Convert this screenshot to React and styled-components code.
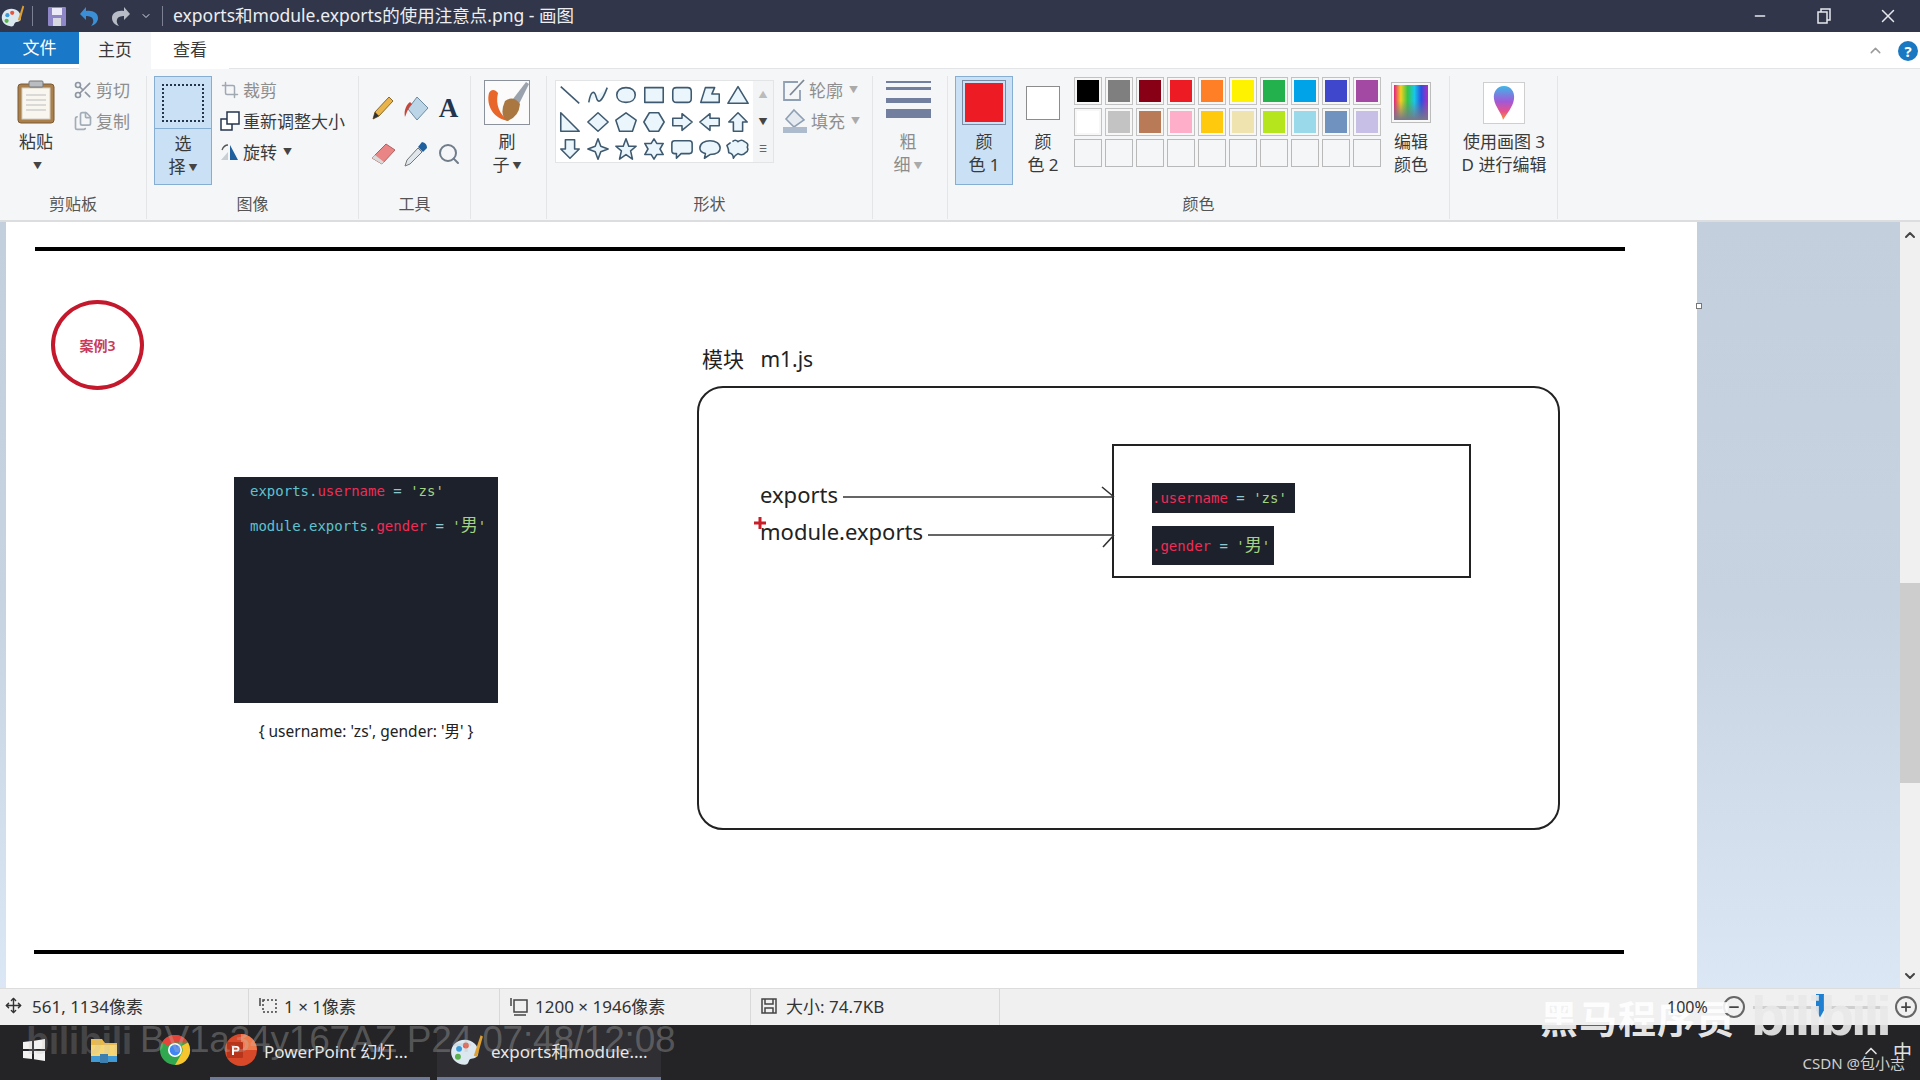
import React from 'react';
import styled, { createGlobalStyle } from 'styled-components';
import { ChevronUp, ChevronDown, Minus, X, Plus, Scissors, Files, Crop, Search, Move } from 'lucide-react';

const UI_FONT = '"Noto Sans", "Noto Sans CJK SC", sans-serif';
const CODE_FONT = '"DejaVu Sans Mono", "Noto Sans CJK SC", monospace';

const GlobalStyle = createGlobalStyle`
	html, body { margin: 0; padding: 0; background: #fff; }
	body { font-family: ${UI_FONT}; overflow: hidden; }
	* { box-sizing: border-box; }
`;

const Screen = styled.div`
	position: relative;
	width: 1920px;
	height: 1080px;
	overflow: hidden;
	display: flex;
	flex-direction: column;
	color: #3a3a3a;
`;

/* title bar */
const TitleBar = styled.div`
	height: 32px;
	background: #31364a;
	display: flex;
	align-items: center;
	color: #eceef2;
`;
const QuickIcon = styled.div`
	width: ${(p) => p.$w}px;
	height: 24px;
	display: flex;
	align-items: center;
	justify-content: center;
`;
const TitleRule = styled.div`
	width: 1px;
	height: 20px;
	background: #7b8092;
	margin: 0 ${(p) => p.$l}px 0 ${(p) => p.$r}px;
`;
const TitleText = styled.div`
	font-size: 17.5px;
	white-space: nowrap;
	flex: 1;
	line-height: 28px;
	height: 30px;
`;
const WindowButton = styled.div`
	width: 64px;
	height: 32px;
	display: flex;
	align-items: center;
	justify-content: center;
`;

/* tabs */
const TabRow = styled.div`
	height: 37px;
	background: #fff;
	display: flex;
	align-items: flex-start;
	border-bottom: 1px solid #e3e4e6;
	font-size: 17px;
`;
const FileTab = styled.div`
	width: 79px;
	height: 32px;
	background: #1979c8;
	color: #fff;
	text-align: center;
	line-height: 31px;
`;
const Tab = styled.div`
	width: ${(p) => p.$w}px;
	height: 37px;
	background: ${(p) => (p.$active ? '#f5f6f7' : '#fff')};
	text-align: center;
	line-height: 35px;
`;
const TabSpacer = styled.div`
	flex: 1;
`;
const TabTools = styled.div`
	display: flex;
	align-items: center;
	gap: 14px;
	height: 37px;
	padding-right: 2px;
`;
const HelpDot = styled.div`
	width: 20px;
	height: 20px;
	border-radius: 50%;
	background: #1a78c2;
	color: #fff;
	font-size: 15px;
	font-weight: 700;
	text-align: center;
	line-height: 20px;
`;

/* ribbon */
const Ribbon = styled.div`
	height: 153px;
	background: #f5f6f7;
	border-bottom: 2px solid #dcdddf;
	display: flex;
	padding-top: 7px;
`;
const Group = styled.div`
	width: ${(p) => p.$w}px;
	height: 143px;
	border-right: 1px solid #e4e5e7;
	display: flex;
	flex-direction: column;
	flex-shrink: 0;
`;
const GroupBody = styled.div`
	height: ${(p) => p.$h || 114}px;
	display: flex;
	padding-left: ${(p) => p.$pad || 0}px;
`;
const GroupLabel = styled.div`
	height: 29px;
	text-align: center;
	font-size: 16px;
	line-height: 28px;
	color: #555;
`;
const BigButton = styled.div`
	width: ${(p) => p.$w}px;
	height: 109px;
	flex-shrink: 0;
	margin-left: ${(p) => p.$ml || 0}px;
	display: flex;
	flex-direction: column;
	align-items: center;
	background: ${(p) => (p.$active ? '#c9e0f5' : 'transparent')};
	border: 1px solid ${(p) => (p.$active ? '#86aed3' : 'transparent')};
	color: ${(p) => (p.$muted ? '#8c8c8c' : '#3a3a3a')};
`;
const BigIcon = styled.div`
	height: 50px;
	padding-top: 3px;
	display: flex;
	align-items: flex-start;
	justify-content: center;
	flex-shrink: 0;
`;
const SelectTop = styled.div`
	width: 100%;
	height: 52px;
	border-bottom: 1px solid #86aed3;
	display: flex;
	align-items: center;
	justify-content: center;
	flex-shrink: 0;
`;
const Marquee = styled.div`
	width: 42px;
	height: 38px;
	border: 2px dotted #24344d;
`;
const BigText = styled.div`
	font-size: 17px;
	line-height: 23px;
	margin-top: 3px;
	text-align: center;
	white-space: pre-line;
`;
const Caret = styled.span`
	font-size: 9px;
	vertical-align: 2px;
	margin-left: 3px;
	color: ${(p) => p.$c || '#444'};
`;
const SmallList = styled.div`
	display: flex;
	flex-direction: column;
	margin-left: ${(p) => p.$ml}px;
	margin-top: -2px;
`;
const SmallRow = styled.div`
	height: 31px;
	display: flex;
	align-items: center;
	gap: 3px;
	font-size: 17px;
	white-space: nowrap;
	color: ${(p) => (p.$muted ? '#8e8e8e' : '#3a3a3a')};
`;
const SmallIcon = styled.div`
	width: 21px;
	display: flex;
	justify-content: center;
`;
const ToolGrid = styled.div`
	display: grid;
	grid-template-columns: repeat(3, 33px);
	grid-auto-rows: 46px;
	padding: 9px 0 0 7px;
`;
const ToolCell = styled.div`
	display: flex;
	align-items: center;
	justify-content: center;
	font-family: "Liberation Serif", serif;
	font-weight: 700;
	font-size: 27px;
	color: #24344d;
`;
const BrushBox = styled.div`
	width: 46px;
	height: 45px;
	border: 1px solid #8b929c;
	background: #fbfbfb;
`;
const Gallery = styled.div`
	margin-top: 4px;
	width: 219px;
	height: 83px;
	display: flex;
	border: 1px solid #e2e4e6;
	background: #fff;
	flex-shrink: 0;
`;
const GalleryGrid = styled.div`
	width: 197px;
	display: grid;
	grid-template-columns: repeat(7, 28px);
	grid-auto-rows: 27px;
`;
const GalleryCell = styled.div`
	display: flex;
	align-items: center;
	justify-content: center;
`;
const GalleryArrows = styled.div`
	flex: 1;
	background: #f3f4f5;
	display: flex;
	flex-direction: column;
	align-items: center;
	justify-content: space-around;
	font-size: 9px;
	color: #444;
`;
const WidthLines = styled.div`
	width: 45px;
	height: 50px;
	padding-top: 4px;
	display: flex;
	flex-direction: column;
	justify-content: flex-start;
	flex-shrink: 0;
`;
const WidthLine = styled.div`
	height: ${(p) => p.$h}px;
	margin-bottom: ${(p) => p.$mb}px;
	background: #737f9f;
`;
const RedSwatch = styled.div`
	width: 44px;
	height: 45px;
	border: 1px solid #7b8ba3;
	padding: 2px;
	&::before {
		content: '';
		display: block;
		width: 100%;
		height: 100%;
		background: #ed1c24;
	}
`;
const WhiteSwatch = styled.div`
	width: 34px;
	height: 34px;
	margin-top: 6px;
	border: 1px solid #8c8c8c;
	background: #fff;
`;
const Palette = styled.div`
	display: grid;
	grid-template-columns: repeat(10, 28px);
	grid-auto-rows: 28px;
	column-gap: 3px;
	row-gap: 3px;
	margin-left: 7px;
	flex-shrink: 0;
	height: 90px;
	margin-top: 1px;
`;
const PaletteCell = styled.div`
	border: 1px solid ${(p) => (p.$empty ? '#b9b9b9' : '#c2c2c2')};
	padding: 2px;
	background: ${(p) => (p.$empty ? '#f5f6f7' : '#f7f7f7')};
	&::before {
		content: '';
		display: block;
		width: 100%;
		height: 100%;
		background: ${(p) => p.$c};
	}
`;
const RainbowBox = styled.div`
	width: 40px;
	height: 41px;
	margin-top: 2px;
	border: 1px solid #bcbcbc;
	padding: 2px;
	background: #f7f7f7;
	&::before {
		content: '';
		display: block;
		width: 100%;
		height: 100%;
		background:
			linear-gradient(to bottom, transparent 45%, #77778a 100%),
			linear-gradient(to right, #e0207a, #f5d020, #35c448, #18c8e8, #2a50e0, #b02cc0);
	}
`;
const Paint3dBox = styled.div`
	width: 42px;
	height: 42px;
	margin-top: 2px;
	border: 1px solid #cfcfcf;
	background: #fff;
	display: flex;
	align-items: center;
	justify-content: center;
`;

/* work area */
const WorkArea = styled.div`
	height: 766px;
	display: flex;
`;
const Workspace = styled.div`
	flex: 1;
	padding-left: 6px;
	background: linear-gradient(to bottom, #c4cfdd 0%, #c8d3e2 50%, #dce7f6 100%);
`;
const Sheet = styled.div`
	position: relative;
	width: 1691px;
	height: 100%;
	background: #fff;
`;
const Handle = styled.div`
	position: absolute;
	left: 1690px;
	top: 81px;
	width: 6px;
	height: 6px;
	border: 1px solid #777;
	background: #fff;
`;
const Scrollbar = styled.div`
	position: relative;
	width: 20px;
	background: #f0f0f0;
	display: flex;
	flex-direction: column;
	justify-content: space-between;
	align-items: center;
	padding: 5px 0 4px;
	color: #444;
`;
const ScrollThumb = styled.div`
	position: absolute;
	left: 0;
	top: 361px;
	width: 20px;
	height: 200px;
	background: #cdcdcd;
`;

/* the picture open in paint */
const Rule = styled.div`
	position: absolute;
	left: ${(p) => p.$x}px;
	top: ${(p) => p.$y}px;
	width: 1590px;
	height: 4px;
	background: #000;
`;
const Badge = styled.div`
	position: absolute;
	left: 45px;
	top: 78px;
	width: 93px;
	height: 90px;
	border: 4px solid #c4182c;
	border-radius: 50%;
	display: flex;
	align-items: center;
	justify-content: center;
	font-size: 14px;
	font-weight: 600;
	color: #c93a5c;
`;
const CodeCard = styled.div`
	position: absolute;
	left: 228px;
	top: 255px;
	width: 264px;
	height: 226px;
	background: #1d212c;
	padding: 2px 0 0 16px;
	font-family: ${CODE_FONT};
	font-size: 14px;
	white-space: pre;
`;
const CodeLine = styled.div`
	height: 34px;
	line-height: 24px;
`;
const Obj = styled.span`
	color: #5fc3cf;
`;
const Prop = styled.span`
	color: #f02c55;
`;
const Op = styled.span`
	color: #8fc7d0;
`;
const Str = styled.span`
	color: #a3d283;
`;
const Wide = styled.span`
	font-size: 17px;
`;
const Caption = styled.div`
	position: absolute;
	left: 228px;
	top: 497px;
	width: 264px;
	text-align: center;
	font-size: 15.5px;
	line-height: 24px;
	color: #222;
`;
const ModuleTitle = styled.div`
	position: absolute;
	left: 696px;
	top: 122px;
	font-size: 21px;
	line-height: 30px;
	color: #222;
	white-space: pre;
`;
const ModuleBox = styled.div`
	position: absolute;
	left: 691px;
	top: 164px;
	width: 863px;
	height: 444px;
	border: 2px solid #222;
	border-radius: 26px;
`;
const InnerBox = styled.div`
	position: absolute;
	left: 1106px;
	top: 222px;
	width: 359px;
	height: 134px;
	border: 2px solid #222;
`;
const VarName = styled.div`
	position: absolute;
	left: 754px;
	top: ${(p) => p.$y}px;
	font-size: 22px;
	line-height: 32px;
	color: #222;
`;
const Chip = styled.div`
	position: absolute;
	left: 1146px;
	top: ${(p) => p.$y}px;
	width: ${(p) => p.$w}px;
	height: ${(p) => p.$h}px;
	background: #1d212c;
	font-family: ${CODE_FONT};
	font-size: 14px;
	line-height: ${(p) => p.$h}px;
	white-space: pre;
`;
const ArrowLayer = styled.svg`
	position: absolute;
	left: 0;
	top: 0;
	width: 1691px;
	height: 766px;
	pointer-events: none;
`;

/* status bar */
const StatusBar = styled.div`
	height: 37px;
	background: #f0f0f0;
	border-top: 1px solid #dcdcdc;
	display: flex;
	align-items: center;
	font-size: 17px;
	color: #333;
`;
const StatusCell = styled.div`
	width: ${(p) => p.$w}px;
	height: 100%;
	border-right: 1px solid #d9d9d9;
	display: flex;
	align-items: center;
	gap: ${(p) => p.$gap || 6}px;
	padding-left: ${(p) => p.$pad}px;
	padding-bottom: 3px;
	white-space: nowrap;
`;
const ZoomArea = styled.div`
	flex: 1;
	display: flex;
	align-items: center;
	justify-content: flex-end;
	gap: 6px;
	padding-right: 3px;
`;
const ZoomText = styled.div`
	position: relative;
	z-index: 2;
	font-size: 16px;
	width: 45px;
	margin-right: 5px;
`;
const ZoomButton = styled.div`
	width: 22px;
	height: 22px;
	border-radius: 50%;
	border: 2px solid #666;
	display: flex;
	align-items: center;
	justify-content: center;
	color: #444;
`;
const ZoomTrack = styled.div`
	position: relative;
	width: 134px;
	height: 3px;
	margin: 0 2px;
	background: #cfcfcf;
`;
const ZoomThumb = styled.div`
	position: absolute;
	left: 63px;
	top: -12px;
	width: 8px;
	height: 24px;
	background: #1f7fd0;
	clip-path: polygon(0 0, 100% 0, 100% 70%, 50% 100%, 0 70%);
`;

/* taskbar */
const Taskbar = styled.div`
	height: 55px;
	background: #242426;
	display: flex;
	align-items: stretch;
	color: #e8e8e8;
	font-size: 17px;
`;
const TaskItem = styled.div`
	width: ${(p) => p.$w}px;
	margin-right: ${(p) => p.$mr || 0}px;
	display: flex;
	align-items: center;
	justify-content: ${(p) => (p.$label ? 'flex-start' : 'center')};
	gap: ${(p) => p.$gap || 6}px;
	padding-left: ${(p) => p.$pad || 0}px;
	padding-bottom: 2px;
	white-space: nowrap;
	background: ${(p) => (p.$active ? '#2f2f33' : 'transparent')};
	border-bottom: 3px solid ${(p) => (p.$open ? '#6f7a96' : 'transparent')};
`;
const Tray = styled.div`
	position: absolute;
	right: 8px;
	top: 1037px;
	display: flex;
	align-items: center;
	gap: 12px;
	color: #e0e0e0;
	font-size: 19px;
`;

/* video watermarks */
const VideoStamp = styled.div`
	position: absolute;
	left: 140px;
	top: 1017px;
	font-family: "Liberation Sans", sans-serif;
	font-size: 37px;
	line-height: 46px;
	letter-spacing: -0.2px;
	color: rgba(190, 190, 190, 0.33);
	white-space: nowrap;
`;
const BiliGhost = styled.div`
	position: absolute;
	left: 26px;
	top: 1018px;
	font-family: "Liberation Sans", sans-serif;
	font-size: 38px;
	line-height: 46px;
	font-weight: 700;
	letter-spacing: -0.5px;
	color: rgba(190, 190, 190, 0.22);
`;
const BrandText = styled.div`
	position: absolute;
	left: 1540px;
	top: 990px;
	font-size: 38px;
	line-height: 56px;
	font-weight: 700;
	letter-spacing: 1px;
	color: rgba(255, 255, 255, 0.9);
	white-space: nowrap;
`;
const BrandLogo = styled.div`
	position: absolute;
	left: 1751px;
	top: 985px;
	font-family: "Liberation Sans", sans-serif;
	font-size: 56px;
	line-height: 62px;
	font-weight: 700;
	letter-spacing: -3px;
	color: rgba(232, 232, 232, 0.92);
`;
const CsdnMark = styled.div`
	position: absolute;
	right: 15px;
	top: 1052px;
	font-size: 15px;
	line-height: 22px;
	color: #cfcfcf;
	white-space: nowrap;
`;

const row1 = ['#000000', '#7f7f7f', '#880015', '#ed1c24', '#ff7f27', '#fff200', '#22b14c', '#00a2e8', '#3f48cc', '#a349a4'];
const row2 = ['#ffffff', '#c3c3c3', '#b97a57', '#ffaec9', '#ffc90e', '#efe4b0', '#b5e61d', '#99d9ea', '#7092be', '#c8bfe7'];

// shape gallery outlines, 24x24 box
const shapes = [
	'M2 3L22 21',
	'M2 20C4 8 8 6 10 14S16 20 22 4',
	'M12 4C18 4 22 7 22 12S18 20 12 20 2 17 2 12 6 4 12 4Z',
	'M2 4H22V20H2Z',
	'M6 4H18Q22 4 22 8V16Q22 20 18 20H6Q2 20 2 16V8Q2 4 6 4Z',
	'M2 20L7 4H17L14 11H22V20Z',
	'M12 3L23 21H1Z',
	'M2 2L22 22H2Z',
	'M12 2L23 12 12 22 1 12Z',
	'M12 2L23 10 19 22H5L1 10Z',
	'M7 2H17L23 12 17 22H7L1 12Z',
	'M2 8H12V3L23 12 12 21V16H2Z',
	'M22 8H12V3L1 12 12 21V16H22Z',
	'M12 2L22 12H17V22H7V12H2Z',
	'M7 2H17V12H22L12 22 2 12H7Z',
	'M12 1L15 9 23 12 15 15 12 23 9 15 1 12 9 9Z',
	'M12 1L15 9H23L17 14 19 23 12 18 5 23 7 14 1 9H9Z',
	'M12 1L15 6H22L18.5 12 22 18H15L12 23 9 18H2L5.5 12 2 6H9Z',
	'M4 3H20Q23 3 23 6V14Q23 17 20 17H11L6 22V17H4Q1 17 1 14V6Q1 3 4 3Z',
	'M12 3C18 3 23 6 23 11S18 18 12 18L6 22 7 17C3 16 1 14 1 11 1 6 6 3 12 3Z',
	'M6 4Q9 1 12 4 16 1 19 4 24 6 22 10 24 14 20 16 17 20 12 17 8 19 7 22 7 17 2 16 2 12 0 8 3 6 4 5 6 4Z',
];

const ShapeIcon = ({ d }) => (
	<svg width="24" height="24" viewBox="-1 -1 26 26">
		<path d={d} fill="#eaf6fb" stroke="#3f5a70" strokeWidth="1.7" strokeLinejoin="round" />
	</svg>
);

const PasteIcon = () => (
	<svg width="38" height="44" viewBox="0 0 38 44">
		<rect x="1" y="4" width="36" height="39" rx="3" fill="#a97f4c" stroke="#7b5a33" />
		<rect x="5" y="8" width="28" height="31" fill="#f8f6ef" stroke="#d5cfc2" />
		<path d="M9 15H29M9 20H29M9 25H29M9 30H29" stroke="#cfcfcf" strokeWidth="1.5" />
		<rect x="12" y="1" width="14" height="6" rx="1" fill="#b9bcc0" stroke="#777" />
	</svg>
);

const ResizeIcon = () => (
	<svg width="20" height="20" viewBox="0 0 20 20" fill="#fff" stroke="#24344d" strokeWidth="1.5">
		<rect x="1" y="8" width="11" height="11" />
		<rect x="7" y="1" width="12" height="12" />
	</svg>
);

const RotateIcon = () => (
	<svg width="20" height="20" viewBox="0 0 20 20">
		<path d="M10 3L18 18H10Z" fill="#1f5f9e" />
		<path d="M1 18L8 10V18Z" fill="#c9ced4" />
		<path d="M2 8Q4 3 8 3" fill="none" stroke="#555" strokeWidth="1.3" />
	</svg>
);

const PencilIcon = () => (
	<svg width="24" height="26" viewBox="0 0 24 26">
		<path d="M18 2L22 6 8 21 2 24 4 17Z" fill="#e9b44c" stroke="#8a6a2c" />
		<path d="M2 24L4 17 8 21Z" fill="#333" />
	</svg>
);

const BucketIcon = () => (
	<svg width="26" height="28" viewBox="0 0 26 28">
		<path d="M14 3L25 14 14 26 5 15Z" fill="#bcd6e8" stroke="#6e8ba0" />
		<path d="M7 8C2 12 1 18 2 23 4 18 5 14 9 10Z" fill="#c8453a" />
	</svg>
);

const EraserIcon = () => (
	<svg width="26" height="24" viewBox="0 0 26 24">
		<path d="M16 2L25 8 12 22 2 16Z" fill="#e98585" stroke="#b06060" />
		<path d="M2 16L12 22 14 20 5 13Z" fill="#d9d9d9" />
	</svg>
);

const DropperIcon = () => (
	<svg width="26" height="28" viewBox="0 0 26 28">
		<path d="M19 2Q24 3 24 8L20 12 15 7Z" fill="#1f5f9e" />
		<path d="M15 8L19 12 7 24 2 26 4 20Z" fill="#dfe6ec" stroke="#777" />
	</svg>
);

const BrushIcon = () => (
	<svg width="44" height="43" viewBox="0 0 44 43">
		<path d="M4 12C1 24 8 38 24 40 15 34 10 24 13 12 10 8 6 8 4 12Z" fill="#e8662a" />
		<path d="M28 18L41 1 44 3 34 23Z" fill="#9aa3ad" />
		<path d="M20 20Q28 14 35 23 34 36 22 40 14 34 20 20Z" fill="#a9773f" />
	</svg>
);

const OutlineIcon = () => (
	<svg width="24" height="24" viewBox="0 0 24 24" fill="none" stroke="#8fa0b5" strokeWidth="1.8">
		<path d="M16 4H2V22H18V12" />
		<path d="M8 17L22 2" stroke="#7d8796" />
	</svg>
);

const FillIcon = () => (
	<svg width="26" height="26" viewBox="0 0 26 26">
		<path d="M12 2L22 12 12 19 4 11Z" fill="#e6ebf1" stroke="#8fa0b5" strokeWidth="1.6" />
		<rect x="1" y="19" width="24" height="6" fill="#aebbcc" />
	</svg>
);

const Paint3dIcon = () => (
	<svg width="24" height="36" viewBox="0 0 24 36">
		<defs>
			<linearGradient id="drop3d" x1="0" y1="0" x2="0" y2="1">
				<stop offset="0" stopColor="#3fb6e8" />
				<stop offset="0.45" stopColor="#a05ad8" />
				<stop offset="0.75" stopColor="#e8508a" />
				<stop offset="1" stopColor="#f29a30" />
			</linearGradient>
		</defs>
		<path d="M12 1C19 1 23 7 22 14 21 22 15 28 11 35 10 28 3 22 2 14 1 7 5 1 12 1Z" fill="url(#drop3d)" />
	</svg>
);

const PaintAppIcon = ({ size }) => (
	<svg width={size} height={size} viewBox="0 0 30 30">
		<path d="M13 6C6 6 1 11 1 17S6 28 13 28C17 28 16 24 18 23S25 23 25 17 20 6 13 6Z" fill="#dbe8f0" />
		<circle cx="8" cy="14" r="2.6" fill="#3a9ad9" />
		<circle cx="14" cy="11" r="2.6" fill="#e8553a" />
		<circle cx="7" cy="21" r="2.6" fill="#5ab04c" />
		<path d="M21 20L27 2 29 3 24 21Z" fill="#e0a030" />
	</svg>
);

const SaveIcon = () => (
	<svg width="18" height="19" viewBox="0 0 18 19">
		<rect width="18" height="19" rx="1" fill="#8f86c8" />
		<rect x="4" y="1" width="10" height="7" fill="#eceaf6" />
		<rect x="5" y="11" width="8" height="8" fill="#d8d8e0" />
	</svg>
);

const UndoIcon = ({ color, flip }) => (
	<svg width="22" height="22" viewBox="0 0 22 22" style={flip ? { transform: 'scaleX(-1)' } : undefined}>
		<path d="M2 9L8 2V6C15 5 20 8 20 13 20 17 17 20 13 21 16 18 16 14 13 12 11 11 9 11 8 11V15Z" fill={color} />
	</svg>
);

const WindowsIcon = () => (
	<svg width="24" height="24" viewBox="0 0 24 24" fill="#f2f2f2">
		<path d="M1 4L10 3V11H1ZM12 2.7L23 1V11H12ZM1 13H10V21L1 20ZM12 13H23V23L12 21.3Z" />
	</svg>
);

const ExplorerIcon = () => (
	<svg width="32" height="32" viewBox="0 0 32 32">
		<path d="M3 5H14L17 9H29V14H3Z" fill="#e9b949" />
		<rect x="3" y="11" width="26" height="15" fill="#f7d774" />
		<rect x="3" y="22" width="26" height="6" fill="#3f9ad6" />
		<rect x="12" y="20" width="8" height="9" fill="#3f7fb0" />
	</svg>
);

const ChromeIcon = () => (
	<svg width="32" height="32" viewBox="0 0 32 32">
		<circle cx="16" cy="16" r="15" fill="#2fa84f" />
		<path d="M16 1A15 15 0 0 1 29 8.5H16A7.5 7.5 0 0 0 9.5 12.3L3 8.5A15 15 0 0 1 16 1Z" fill="#e5443a" />
		<path d="M29 8.5A15 15 0 0 1 16 31L22.5 19.8A7.5 7.5 0 0 0 22.5 12Z" fill="#f7c62f" />
		<circle cx="16" cy="16" r="7" fill="#fff" />
		<circle cx="16" cy="16" r="5.4" fill="#4285f4" />
	</svg>
);

const PptIcon = () => (
	<svg width="34" height="34" viewBox="0 0 34 34">
		<circle cx="17" cy="17" r="16" fill="#d8492a" />
		<path d="M17 1A16 16 0 0 1 33 17H17Z" fill="#ef7a4c" />
		<rect x="3" y="9" width="16" height="16" rx="1" fill="#b7361b" />
		<path d="M8 13H12.5Q15.5 13 15.5 15.8T12.5 18.6H10V22H8ZM10 14.8V16.8H12.3Q13.5 16.8 13.5 15.8T12.3 14.8Z" fill="#fff" />
	</svg>
);

function BigLabel({ text, caret, caretColor }) {
	return (
		<BigText>
			{text}
			{caret && <Caret $c={caretColor}>▼</Caret>}
		</BigText>
	);
}

export default function App() {
	return (
		<Screen>
			<GlobalStyle />
			<TitleBar>
				<QuickIcon $w={26}><PaintAppIcon size={24} /></QuickIcon>
				<TitleRule $r={6} $l={8} />
				<QuickIcon $w={32}><SaveIcon /></QuickIcon>
				<QuickIcon $w={32}><UndoIcon color="#3b8fd6" /></QuickIcon>
				<QuickIcon $w={31}><UndoIcon color="#b8bcc6" flip /></QuickIcon>
				<QuickIcon $w={20}><ChevronDown size={12} color="#d9dbe2" /></QuickIcon>
				<TitleRule $r={6} $l={10} />
				<TitleText>exports和module.exports的使用注意点.png - 画图</TitleText>
				<WindowButton><Minus size={16} color="#e6e8ee" /></WindowButton>
				<WindowButton>
					<svg width="14" height="16" viewBox="0 0 14 16" fill="none" stroke="#e6e8ee" strokeWidth="1.5">
						<rect x="1" y="4" width="9" height="11" />
						<path d="M4 4V1H13V12H10" />
					</svg>
				</WindowButton>
				<WindowButton><X size={22} color="#e6e8ee" strokeWidth={1.6} /></WindowButton>
			</TitleBar>

			<TabRow>
				<FileTab>文件</FileTab>
				<Tab $w={72} $active>主页</Tab>
				<Tab $w={78}>查看</Tab>
				<TabSpacer />
				<TabTools>
					<ChevronUp size={17} color="#9a9a9a" />
					<HelpDot>?</HelpDot>
				</TabTools>
			</TabRow>

			<Ribbon>
				<Group $w={147}>
					<GroupBody $pad={11}>
						<BigButton $w={50}>
							<BigIcon><PasteIcon /></BigIcon>
							<BigLabel text={'粘贴\n'} caret />
						</BigButton>
						<SmallList $ml={11}>
							<SmallRow $muted><SmallIcon><Scissors size={20} color="#8d96a2" /></SmallIcon>剪切</SmallRow>
							<SmallRow $muted><SmallIcon><Files size={20} color="#a3adb8" /></SmallIcon>复制</SmallRow>
						</SmallList>
					</GroupBody>
					<GroupLabel>剪贴板</GroupLabel>
				</Group>
				<Group $w={212}>
					<GroupBody $pad={7}>
						<BigButton $w={58} $active>
							<SelectTop><Marquee /></SelectTop>
							<BigLabel text={'选\n择'} caret />
						</BigButton>
						<SmallList $ml={7}>
							<SmallRow $muted><SmallIcon><Crop size={18} color="#a0a8b2" /></SmallIcon>裁剪</SmallRow>
							<SmallRow><SmallIcon><ResizeIcon /></SmallIcon>重新调整大小</SmallRow>
							<SmallRow><SmallIcon><RotateIcon /></SmallIcon>旋转<Caret>▼</Caret></SmallRow>
						</SmallList>
					</GroupBody>
					<GroupLabel>图像</GroupLabel>
				</Group>
				<Group $w={112}>
					<ToolGrid>
						<ToolCell><PencilIcon /></ToolCell>
						<ToolCell><BucketIcon /></ToolCell>
						<ToolCell>A</ToolCell>
						<ToolCell><EraserIcon /></ToolCell>
						<ToolCell><DropperIcon /></ToolCell>
						<ToolCell><Search size={24} color="#6f7c8a" /></ToolCell>
					</ToolGrid>
					<GroupBody $h={13} />
					<GroupLabel>工具</GroupLabel>
				</Group>
				<Group $w={76}>
					<GroupBody $pad={9}>
						<BigButton $w={54}>
							<BigIcon><BrushBox><BrushIcon /></BrushBox></BigIcon>
							<BigLabel text={'刷\n子'} caret />
						</BigButton>
					</GroupBody>
					<GroupLabel />
				</Group>
				<Group $w={326}>
					<GroupBody $pad={8}>
						<Gallery>
							<GalleryGrid>
								{shapes.map((d) => (
									<GalleryCell key={d}><ShapeIcon d={d} /></GalleryCell>
								))}
							</GalleryGrid>
							<GalleryArrows>
								<span style={{ color: '#bbb' }}>▲</span>
								<span>▼</span>
								<span>☰</span>
							</GalleryArrows>
						</Gallery>
						<SmallList $ml={8}>
							<SmallRow $muted><OutlineIcon />轮廓<Caret $c="#aaa">▼</Caret></SmallRow>
							<SmallRow $muted><FillIcon />填充<Caret $c="#aaa">▼</Caret></SmallRow>
						</SmallList>
					</GroupBody>
					<GroupLabel>形状</GroupLabel>
				</Group>
				<Group $w={75}>
					<GroupBody $pad={10}>
						<BigButton $w={50} $muted>
							<WidthLines>
								<WidthLine $h={2} $mb={4} />
								<WidthLine $h={3} $mb={8} />
								<WidthLine $h={5} $mb={6} />
								<WidthLine $h={9} $mb={0} />
							</WidthLines>
							<BigLabel text={'粗\n细'} caret caretColor="#aaa" />
						</BigButton>
					</GroupBody>
					<GroupLabel />
				</Group>
				<Group $w={502}>
					<GroupBody $pad={7}>
						<BigButton $w={58} $active>
							<BigIcon><RedSwatch /></BigIcon>
							<BigLabel text={'颜\n色 1'} />
						</BigButton>
						<BigButton $w={48} $ml={6}>
							<BigIcon><WhiteSwatch /></BigIcon>
							<BigLabel text={'颜\n色 2'} />
						</BigButton>
						<Palette>
							{row1.map((c) => <PaletteCell key={c} $c={c} />)}
							{row2.map((c) => <PaletteCell key={c} $c={c} />)}
							{row1.map((c) => <PaletteCell key={`empty-${c}`} $c="#f5f6f7" $empty />)}
						</Palette>
						<BigButton $w={50} $ml={5}>
							<BigIcon><RainbowBox /></BigIcon>
							<BigLabel text={'编辑\n颜色'} />
						</BigButton>
					</GroupBody>
					<GroupLabel>颜色</GroupLabel>
				</Group>
				<Group $w={108}>
					<GroupBody>
						<BigButton $w={108}>
							<BigIcon><Paint3dBox><Paint3dIcon /></Paint3dBox></BigIcon>
							<BigLabel text={'使用画图 3\nD 进行编辑'} />
						</BigButton>
					</GroupBody>
					<GroupLabel />
				</Group>
			</Ribbon>

			<WorkArea>
				<Workspace>
					<Sheet>
						<Rule $x={29} $y={25} />
						<Badge>案例3</Badge>
						<CodeCard>
							<CodeLine><Obj>exports.</Obj><Prop>username</Prop><Op> = </Op><Str>'zs'</Str></CodeLine>
							<CodeLine><Obj>module.exports.</Obj><Prop>gender</Prop><Op> = </Op><Str>'<Wide>男</Wide>'</Str></CodeLine>
						</CodeCard>
						<Caption>{"{ username: 'zs', gender: '男' }"}</Caption>
						<ModuleTitle>模块   m1.js</ModuleTitle>
						<ModuleBox />
						<InnerBox />
						<VarName $y={256}>exports</VarName>
						<VarName $y={293}>module.exports</VarName>
						<Chip $y={261} $w={143} $h={30}><Prop>.username</Prop><Op> = </Op><Str>'zs'</Str></Chip>
						<Chip $y={304} $w={122} $h={39}><Prop>.gender</Prop><Op> = </Op><Str>'<Wide>男</Wide>'</Str></Chip>
						<ArrowLayer viewBox="0 0 1691 766">
							<g fill="none" stroke="#333" strokeWidth="1.6">
								<path d="M837 275H1108M1096 265L1108 275" />
								<path d="M922 313H1108M1097 325L1108 313" />
							</g>
							<path d="M748 301H760M754 295V307" stroke="#c81e28" strokeWidth="3" />
						</ArrowLayer>
						<Rule $x={28} $y={728} />
						<Handle />
					</Sheet>
				</Workspace>
				<Scrollbar>
					<ChevronUp size={16} strokeWidth={3} />
					<ScrollThumb />
					<ChevronDown size={16} strokeWidth={3} />
				</Scrollbar>
			</WorkArea>

			<StatusBar>
				<StatusCell $w={249} $pad={5} $gap={10}><Move size={17} />561, 1134像素</StatusCell>
				<StatusCell $w={251} $pad={9} $gap={6}>
					<svg width="20" height="20" viewBox="0 0 20 20" fill="none" stroke="#444" strokeWidth="1.5">
						<rect x="5" y="4" width="13" height="12" strokeDasharray="2 2" />
						<path d="M2 2V10" />
					</svg>
					1 × 1像素
				</StatusCell>
				<StatusCell $w={251} $pad={9} $gap={6}>
					<svg width="20" height="20" viewBox="0 0 20 20" fill="none" stroke="#444" strokeWidth="1.5">
						<rect x="5" y="4" width="13" height="12" />
						<path d="M2 2V10M5 19H17" />
					</svg>
					1200 × 1946像素
				</StatusCell>
				<StatusCell $w={249} $pad={9} $gap={8}>
					<svg width="18" height="18" viewBox="0 0 18 18" fill="none" stroke="#444" strokeWidth="1.5">
						<path d="M2 2H16V16H2ZM5 2V7H13V2M5 16V11H13V16" />
					</svg>
					大小: 74.7KB
				</StatusCell>
				<ZoomArea>
					<ZoomText>100%</ZoomText>
					<ZoomButton><Minus size={14} strokeWidth={3} /></ZoomButton>
					<ZoomTrack><ZoomThumb /></ZoomTrack>
					<ZoomButton><Plus size={14} strokeWidth={3} /></ZoomButton>
				</ZoomArea>
			</StatusBar>

			<Taskbar>
				<TaskItem $w={68}><WindowsIcon /></TaskItem>
				<TaskItem $w={72}><ExplorerIcon /></TaskItem>
				<TaskItem $w={70}><ChromeIcon /></TaskItem>
				<TaskItem $w={220} $mr={7} $label $pad={14} $open><PptIcon />PowerPoint 幻灯...</TaskItem>
				<TaskItem $w={224} $label $pad={13} $gap={7} $open $active><PaintAppIcon size={34} />exports和module....</TaskItem>
			</Taskbar>

			<BiliGhost>bilibili</BiliGhost>
			<VideoStamp>BV1a34y167AZ P24 07:48/12:08</VideoStamp>
			<BrandText>黑马程序员</BrandText>
			<BrandLogo>bilibili</BrandLogo>
			<Tray><ChevronUp size={20} />中</Tray>
			<CsdnMark>CSDN @包小志</CsdnMark>
		</Screen>
	);
}
